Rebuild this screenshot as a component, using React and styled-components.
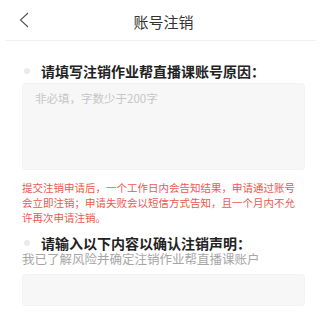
import React from "react";
import styled, { createGlobalStyle } from "styled-components";

const Global = createGlobalStyle`
  html, body { margin: 0; padding: 0; background: #fff; }
  body { font-family: "Noto Sans CJK SC", "Noto Sans", sans-serif; }
  * { box-sizing: border-box; }
`;

const Page = styled.div`
  width: 319px;
  height: 318px;
  overflow: hidden;
  background: #fff;
`;

const Header = styled.header`
  height: 40px;
  display: grid;
  grid-template-columns: 1fr auto 1fr;
  align-items: center;
  padding-left: 8px;
`;

const BackButton = styled.button`
  justify-self: start;
  margin-left: 11px;
  padding: 0;
  border: none;
  background: none;
  display: flex;
  align-items: center;
  width: 12px;
  height: 18px;
`;

const Title = styled.h1`
  margin: 0;
  font-size: 15px;
  font-weight: 400;
  color: #333;
  line-height: 20px;
  position: relative;
  top: 2px;
`;

const Divider = styled.div`
  height: 1px;
  margin: 0 3px 0 5px;
  background: #f2f2f2;
`;

const Content = styled.main`
  padding: 0 14px 0 22px;
  display: flex;
  flex-direction: column;
`;

const Heading = styled.h2`
  margin: ${(p) => p.$top}px 0 0;
  display: flex;
  align-items: center;
  gap: 11px;
  font-size: 14px;
  font-weight: 700;
  line-height: 16px;
  color: #222;
`;

const Dot = styled.span`
  width: 6px;
  height: 6px;
  margin-left: 2px;
  border-radius: 50%;
  background: #ebebeb;
  flex: none;
`;

const Area = styled.textarea`
  margin-top: 4px;
  height: 87px;
  width: 100%;
  resize: none;
  border: 1px solid #f3f3f3;
  border-radius: 4px;
  background: #f7f7f7;
  padding: 6px 12px;
  font-family: inherit;
  font-size: 11.5px;
  line-height: 16px;
  color: #333;
  outline: none;
  &::placeholder { color: #c6c6c6; }
`;

const Notice = styled.p`
  margin: 9.5px 0 0;
  max-width: 280px;
  font-size: 10.5px;
  line-height: 15px;
  color: #ec5850;
`;

const Statement = styled.p`
  margin: 1px 0 0;
  font-size: 12.5px;
  line-height: 14px;
  color: #a6a6a6;
`;

const Input = styled.input`
  margin-top: 8px;
  height: 32px;
  width: 100%;
  border: 1px solid #f3f3f3;
  border-radius: 4px;
  background: #f7f7f7;
  padding: 0 12px;
  font-family: inherit;
  font-size: 12.5px;
  outline: none;
`;

export default function App() {
  return (
    <Page>
      <Global />
      <Header>
        <BackButton aria-label="返回">
          <svg width="10" height="16" viewBox="0 0 10 16">
            <polyline points="9,1 1.5,8 9,15" fill="none" stroke="#555" strokeWidth="1.1" />
          </svg>
        </BackButton>
        <Title>账号注销</Title>
        <span />
      </Header>
      <Divider />
      <Content>
        <Heading $top={22}>
          <Dot />
          请填写注销作业帮直播课账号原因：
        </Heading>
        <Area placeholder="非必填，字数少于200字" />
        <Notice>
          提交注销申请后，一个工作日内会告知结果，申请通过账号会立即注销；申请失败会以短信方式告知，且一个月内不允许再次申请注销。
        </Notice>
        <Heading $top={10}>
          <Dot />
          请输入以下内容以确认注销声明：
        </Heading>
        <Statement>我已了解风险并确定注销作业帮直播课账户</Statement>
        <Input />
      </Content>
    </Page>
  );
}
